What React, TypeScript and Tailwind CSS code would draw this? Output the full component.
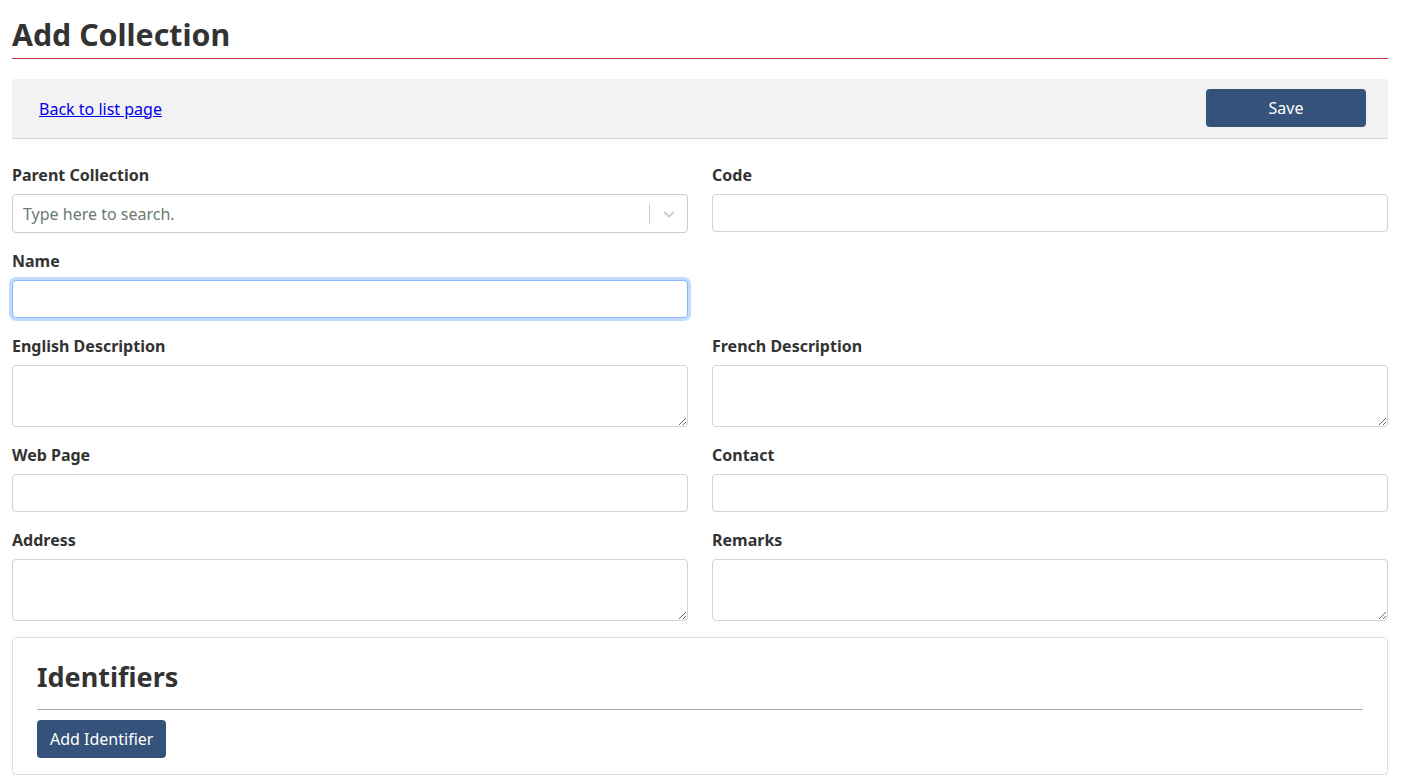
import React from "react";

const font = { fontFamily: '"Noto Sans", "Open Sans", sans-serif' };

function Label({ children }: { children: React.ReactNode }) {
  return <label className="block text-[16px] leading-6 font-bold text-[#333] mb-[7px]">{children}</label>;
}

function TextInput({ focused = false }: { focused?: boolean }) {
  return (
    <input
      type="text"
      className={
        "block w-full h-[38px] rounded-[4px] bg-white px-3 text-[16px] outline-none " +
        (focused
          ? "border border-[#86b7fe] shadow-[0_0_0_3px_rgba(13,110,253,0.25)]"
          : "border border-[#ced4da]")
      }
    />
  );
}

function TextArea() {
  return (
    <textarea className="block w-full h-[62px] rounded-[4px] border border-[#ced4da] bg-white px-3 py-1 text-[16px] outline-none resize-y" />
  );
}

export default function App() {
  return (
    <div className="min-h-screen bg-white pl-3 pr-[14px] text-[#333]" style={font}>
      <h1 className="mt-4 pb-1 text-[30.3px] leading-[38px] font-bold text-[#333] border-b border-[#c0313d]">
        Add Collection
      </h1>
      <div className="mt-5 flex h-[60px] items-center justify-between bg-[#f2f2f2] border-b border-[#d6d6d6] pl-[27px] pr-[22px]">
        <a href="#" className="text-[16px] text-[#0000ee] underline">
          Back to list page
        </a>
        <button className="-mt-[2px] h-[38px] w-[160px] rounded-[4px] bg-[#34527a] text-[16px] text-white">Save</button>
      </div>

      <div className="mt-6 grid grid-cols-2 gap-x-6 gap-y-4">
        <div>
          <Label>Parent Collection</Label>
          <div className="flex h-[39px] items-center rounded-[4px] border border-[#cccccc] bg-white">
            <div className="flex-1 pl-[10px] text-[16px] text-[#6b7a72]">Type here to search.</div>
            <div className="h-[20px] w-px bg-[#cccccc]" />
            <div className="flex w-[37px] items-center justify-center">
              <svg width="18" height="18" viewBox="0 0 20 20" fill="#cccccc">
                <path d="M4.516 7.548c0.436-0.446 1.043-0.481 1.576 0l3.908 3.747 3.908-3.747c0.533-0.481 1.141-0.446 1.574 0 0.436 0.445 0.408 1.197 0 1.615-0.406 0.418-4.695 4.502-4.695 4.502-0.217 0.223-0.502 0.335-0.787 0.335s-0.57-0.112-0.789-0.335c0 0-4.287-4.084-4.695-4.502s-0.436-1.170 0-1.615z" />
              </svg>
            </div>
          </div>
        </div>
        <div>
          <Label>Code</Label>
          <TextInput />
        </div>

        <div>
          <Label>Name</Label>
          <TextInput focused />
        </div>
        <div />

        <div>
          <Label>English Description</Label>
          <TextArea />
        </div>
        <div>
          <Label>French Description</Label>
          <TextArea />
        </div>

        <div>
          <Label>Web Page</Label>
          <TextInput />
        </div>
        <div>
          <Label>Contact</Label>
          <TextInput />
        </div>

        <div>
          <Label>Address</Label>
          <TextArea />
        </div>
        <div>
          <Label>Remarks</Label>
          <TextArea />
        </div>
      </div>

      <div className="mt-4 rounded-[4px] border border-[#dddddd] px-[24px] pt-[22px] pb-[16px]">
        <h2 className="text-[27px] leading-[34px] font-bold text-[#333]">Identifiers</h2>
        <div className="mt-[15px] h-px bg-[#aaaaaa]" />
        <button className="mt-[10px] h-[38px] rounded-[4px] bg-[#34527a] px-[13px] text-[16px] text-white">
          Add Identifier
        </button>
      </div>
    </div>
  );
}
